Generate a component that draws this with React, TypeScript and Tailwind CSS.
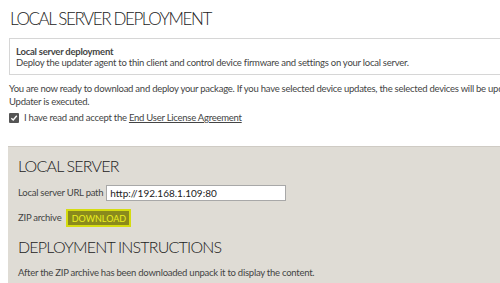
export default function App() {
  const f = { fontFamily: 'Lato, "Noto Sans", sans-serif' };
  const body = "text-[9.5px] tracking-[-0.25px] text-[#444]";
  return (
    <div className="w-[500px] h-[283px] overflow-hidden bg-white text-[#333]" style={f}>
      <div className="w-[700px] pl-[9px] pt-[9px]">
        <h1 className="text-[17px] font-light leading-[20px] text-[#222] pl-[1px] tracking-[-1.4px]">LOCAL SERVER DEPLOYMENT</h1>
        <div className="mt-[9px] border border-[#d6d6d6] h-[37px] pl-[6px] pt-[7px]">
          <div className={`${body} font-bold leading-[11px] text-[#222]`}>Local server deployment</div>
          <div className={`${body} leading-[11px]`}>Deploy the updater agent to thin client and control device firmware and settings on your local server.</div>
        </div>
        <p className={`mt-[7px] ${body} leading-[13px] whitespace-nowrap`}>
          You are now ready to download and deploy your package. If you have selected device updates, the selected devices will be updated when the
          <br />
          Updater is executed.
        </p>
        <div className={`mt-[3px] flex items-center gap-[5px] ${body} leading-[14px]`}>
          <span className="w-[10px] h-[10px] bg-[#555] rounded-[1px] flex items-center justify-center">
            <svg width="8" height="8" viewBox="0 0 8 8"><path d="M1.3 4.2 L3.2 6 L6.8 1.8" stroke="white" strokeWidth="1.4" fill="none" /></svg>
          </span>
          <span>I have read and accept the <span className="underline">End User License Agreement</span></span>
        </div>
        <div className="mt-[21px] -ml-[1px] bg-[#dfdcd5] border-t border-[#cfcbc4] h-[200px] pl-[10px] pt-[9px]">
          <h2 className="text-[16px] font-light leading-[20px] text-[#222] tracking-[-0.8px]">LOCAL SERVER</h2>
          <div className={`mt-[9px] flex items-center gap-[3px] ${body} text-[#333]`}>
            <span>Local server URL path</span>
            <div className="w-[180px] h-[16px] bg-white border border-[#a8a8a8] text-[10px] leading-[14px] pl-[3px] text-[#222] tracking-normal">http://192.168.1.109:80</div>
          </div>
          <div className={`mt-[8px] flex items-center gap-[4px] ${body} text-[#333]`}>
            <span>ZIP archive</span>
            <span className="ml-[1px] h-[18px] w-[65px] flex items-center justify-center bg-[#8a8a1c] border-2 border-[#d5dc10] text-[#eaf020] text-[9px] leading-none tracking-normal">DOWNLOAD</span>
          </div>
          <h2 className="mt-[10px] text-[16px] font-light leading-[20px] text-[#222] tracking-[-0.8px]">DEPLOYMENT INSTRUCTIONS</h2>
          <p className={`mt-[9px] ${body} leading-[13px]`}>After the ZIP archive has been downloaded unpack it to display the content.</p>
        </div>
      </div>
    </div>
  );
}
